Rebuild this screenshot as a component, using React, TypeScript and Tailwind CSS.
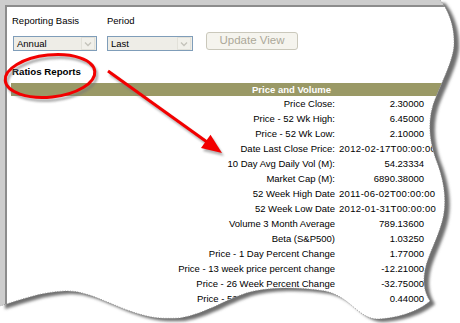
import React from "react";

const EDGE =
  "M440,0 C447,8 455,25 454,45 C453,62 440,85 433,105 C427,125 430,145 438,165 C445,185 447,205 442,222 C437,240 428,255 425,270 C422,285 426,295 430,301 C420,310 400,318 378,319 C358,319 350,296 325,291 C300,287 270,287 250,292 C230,297 205,314 180,318 C160,319 150,318 130,311 C105,302 85,290 65,291 C40,292 20,300 0,306";
const PAPER = `M0,0 L${EDGE.slice(1)} Z`;
const OUTSIDE = `M0,0 H460 V323 H0 Z ${PAPER}`;

const rows: [string, string, boolean?][] = [
  ["Price Close:", "2.30000"],
  ["Price - 52 Wk High:", "6.45000"],
  ["Price - 52 Wk Low:", "2.10000"],
  ["Date Last Close Price:", "2012-02-17T00:00:00", true],
  ["10 Day Avg Daily Vol (M):", "54.23334"],
  ["Market Cap (M):", "6890.38000"],
  ["52 Week High Date", "2011-06-02T00:00:00", true],
  ["52 Week Low Date", "2012-01-31T00:00:00", true],
  ["Volume 3 Month Average", "789.13600"],
  ["Beta (S&P500)", "1.03250"],
  ["Price - 1 Day Percent Change", "1.77000"],
  ["Price - 13 week price percent change", "-12.21000"],
  ["Price - 26 Week Percent Change", "-32.75000"],
  ["Price - 52 Week Moving Average", "0.44000"],
];

function Select({ value, width }: { value: string; width: string }) {
  return (
    <div className={`${width} h-[15px] border border-[#7f9db9] bg-[#eeede7] flex items-center`}>
      <span className="flex-1 pl-[3px] text-[9.5px] leading-[13px] text-black">{value}</span>
      <span className="w-[14px] h-[13px] mr-[1px] border border-[#e2e1d9] bg-[#f1f0ea] flex items-center justify-center">
        <svg width="8" height="6" viewBox="0 0 8 6">
          <path d="M1 1.5 L4 4.5 L7 1.5" fill="none" stroke="#c4c3bb" strokeWidth="1.3" />
        </svg>
      </span>
    </div>
  );
}

export default function App() {
  return (
    <div className="relative w-[460px] h-[323px] overflow-hidden bg-white text-black font-['Liberation_Sans',Arial,sans-serif]">
      <div className="h-full border-l-[5px] border-t-[5px] border-[#cdcdcd]">
        <div className="h-full border-l-2 border-t-2 border-[#8c8c8c] bg-white pt-[8px]">
          <div className="flex items-end pl-[5px]">
            <div className="flex flex-col">
              <span className="text-[9.5px] leading-[12px]">Reporting Basis</span>
              <div className="mt-[9px] ml-[1px]">
                <Select value="Annual" width="w-[84px]" />
              </div>
            </div>
            <div className="flex flex-col ml-[10px]">
              <span className="text-[9.5px] leading-[12px]">Period</span>
              <div className="mt-[9px]">
                <Select value="Last" width="w-[86px]" />
              </div>
            </div>
            <div className="ml-[13px] mb-[1px] w-[92px] h-[18px] rounded-[3px] border border-[#cac8bb] bg-[#f5f4ee] flex items-center justify-center text-[11.5px] text-[#aca899]">
              Update View
            </div>
          </div>
          <div className="pl-[5px] mt-[15px] text-[9.7px] leading-[12px] font-bold">Ratios Reports</div>
          <div className="ml-[4px] mt-[5px] w-[560px]">
            <div className="h-[13px] bg-[#9a9966] text-white font-bold text-[9.5px] leading-[13px] pl-[241px] whitespace-nowrap">
              Price and Volume
            </div>
            {rows.map(([label, value, isDate]) => (
              <div key={label} className="flex h-[15px] items-center text-[9.5px] leading-[15px] whitespace-nowrap">
                <span className="w-[324px] flex-none text-right">{label}</span>
                {isDate ? (
                  <span className="flex-none pl-[4px] tracking-[0.3px]">{value}</span>
                ) : (
                  <span className="w-[89px] flex-none text-right">{value}</span>
                )}
              </div>
            ))}
          </div>
        </div>
      </div>

      <svg className="absolute inset-0" width="460" height="323" viewBox="0 0 460 323">
        <defs>
          <filter id="sh" x="-20%" y="-20%" width="140%" height="140%">
            <feGaussianBlur stdDeviation="1.6" />
          </filter>
          <filter id="sh2" x="-20%" y="-20%" width="140%" height="140%">
            <feGaussianBlur stdDeviation="1.2" />
          </filter>
          <clipPath id="outside">
            <path clipRule="evenodd" d={OUTSIDE} />
          </clipPath>
        </defs>
        <path d={OUTSIDE} fill="#ffffff" fillRule="evenodd" />
        <g clipPath="url(#outside)">
          <path d={PAPER} transform="translate(5,3)" fill="#707070" filter="url(#sh)" />
        </g>
        <path d={EDGE} fill="none" stroke="#8a8a8a" strokeWidth="0.8" strokeDasharray="1 1.5" />

        <g filter="url(#sh2)" opacity="0.6">
          <ellipse cx="52" cy="79" rx="45" ry="21" transform="rotate(-6 52 79)" fill="none" stroke="#777" strokeWidth="3" />
        </g>
        <ellipse cx="50" cy="76" rx="45" ry="21" transform="rotate(-6 50 76)" fill="none" stroke="#f20000" strokeWidth="3" />

        <g filter="url(#sh2)" opacity="0.55" transform="translate(2,3)">
          <line x1="108" y1="71" x2="207" y2="142" stroke="#777" strokeWidth="3" />
          <polygon points="222,153 201,148 210.5,134.8" fill="#777" />
        </g>
        <line x1="108" y1="71" x2="207" y2="142" stroke="#f20000" strokeWidth="3" />
        <polygon points="222,153 201,148 210.5,134.8" fill="#f20000" />
      </svg>
    </div>
  );
}
